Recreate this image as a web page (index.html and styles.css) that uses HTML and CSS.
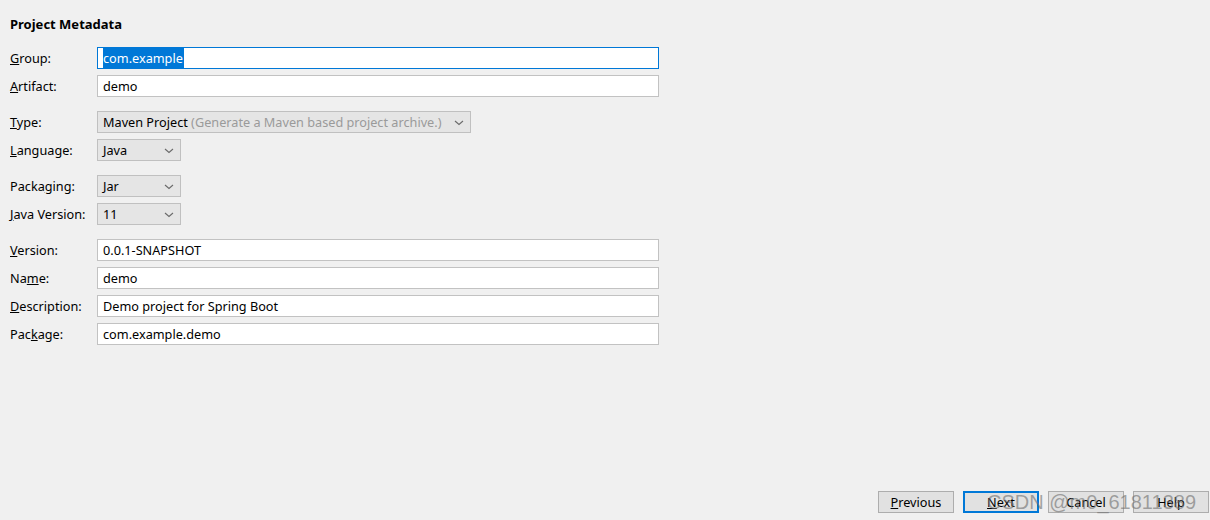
FILE: index.html
```html
<!DOCTYPE html>
<html>
<head>
<meta charset="utf-8">
<link rel="stylesheet" href="styles.css">
</head>
<body>
<div class="page">
  <h1 class="title">Project Metadata</h1>
  <div class="form">
    <div class="row">
      <label class="lbl"><u>G</u>roup:</label>
      <div class="field focus"><span class="sel">com.example</span></div>
    </div>
    <div class="row">
      <label class="lbl"><u>A</u>rtifact:</label>
      <div class="field">demo</div>
    </div>
    <div class="row sp">
      <label class="lbl"><u>T</u>ype:</label>
      <div class="combo wide">Maven Project <span class="hint">(Generate a Maven based project archive.)</span><svg class="chev" viewBox="0 0 10 6"><path d="M1 1 L5 4.5 L9 1" fill="none" stroke="#6a6a6a" stroke-width="1.1"/></svg></div>
    </div>
    <div class="row">
      <label class="lbl"><u>L</u>anguage:</label>
      <div class="combo">Java<svg class="chev" viewBox="0 0 10 6"><path d="M1 1 L5 4.5 L9 1" fill="none" stroke="#6a6a6a" stroke-width="1.1"/></svg></div>
    </div>
    <div class="row sp">
      <label class="lbl">Packa<u>g</u>ing:</label>
      <div class="combo">Jar<svg class="chev" viewBox="0 0 10 6"><path d="M1 1 L5 4.5 L9 1" fill="none" stroke="#6a6a6a" stroke-width="1.1"/></svg></div>
    </div>
    <div class="row">
      <label class="lbl"><u>J</u>ava Version:</label>
      <div class="combo">11<svg class="chev" viewBox="0 0 10 6"><path d="M1 1 L5 4.5 L9 1" fill="none" stroke="#6a6a6a" stroke-width="1.1"/></svg></div>
    </div>
    <div class="row sp">
      <label class="lbl"><u>V</u>ersion:</label>
      <div class="field">0.0.1-SNAPSHOT</div>
    </div>
    <div class="row">
      <label class="lbl">Na<u>m</u>e:</label>
      <div class="field">demo</div>
    </div>
    <div class="row">
      <label class="lbl"><u>D</u>escription:</label>
      <div class="field">Demo project for Spring Boot</div>
    </div>
    <div class="row">
      <label class="lbl">Pac<u>k</u>age:</label>
      <div class="field">com.example.demo</div>
    </div>
  </div>
  <div class="footer">
    <button class="btn"><u>P</u>revious</button>
    <button class="btn default"><u>N</u>ext</button>
    <button class="btn">Cancel</button>
    <button class="btn">Help</button>
    <span class="watermark">CSDN @m0_61811389</span>
  </div>
</div>
</body>
</html>
```

FILE: styles.css
```css
html, body {
  margin: 0;
  padding: 0;
  background: #f0f0f0;
}
body {
  font-family: "Noto Sans", "Open Sans", sans-serif;
  font-size: 12.7px;
  color: #000;
}
.page {
  height: 520px;
  display: flex;
  flex-direction: column;
  box-sizing: border-box;
}
.title {
  margin: 16px 0 0 10px;
  font-size: 13px;
  font-weight: bold;
  line-height: 16px;
  height: 16px;
}
.form {
  margin: 15px 0 0 10px;
  display: flex;
  flex-direction: column;
  gap: 6px;
}
.row {
  display: grid;
  grid-template-columns: 87px 562px;
  height: 22px;
  align-items: center;
}
.row.sp {
  margin-top: 8px;
}
.lbl {
  line-height: 22px;
  white-space: nowrap;
}
.field {
  height: 22px;
  box-sizing: border-box;
  background: #fff;
  border: 1px solid #c2c2c2;
  padding-left: 5px;
  line-height: 20px;
  white-space: nowrap;
}
.field.focus {
  border-color: #0078d7;
}
.sel {
  background: #0078d7;
  color: #fff;
  padding: 1px 1px 2px 0;
}
.combo {
  height: 22px;
  width: 84px;
  box-sizing: border-box;
  background: #e5e5e5;
  border: 1px solid #c0c0c0;
  padding-left: 5px;
  line-height: 20px;
  position: relative;
  white-space: nowrap;
}
.combo.wide {
  width: 374px;
}
.hint {
  color: #9a9a9a;
}
.chev {
  position: absolute;
  right: 6px;
  top: 8px;
  width: 10px;
  height: 6px;
}
.footer {
  margin-top: auto;
  margin-bottom: 7px;
  display: flex;
  justify-content: flex-end;
  gap: 9px;
  padding-right: 1px;
  position: relative;
}
.btn {
  width: 76px;
  height: 22px;
  box-sizing: border-box;
  background: #e1e1e1;
  border: 1px solid #adadad;
  font-family: inherit;
  font-size: 12.7px;
  color: #000;
  padding: 0;
  line-height: 20px;
}
.btn.default {
  border: 2px solid #0078d7;
  line-height: 18px;
}
.watermark {
  position: absolute;
  right: 14px;
  top: -2px;
  font-size: 20px;
  line-height: 26px;
  color: rgba(110, 110, 110, 0.6);
  font-family: "Liberation Sans", Arial, sans-serif;
  pointer-events: none;
}
```
